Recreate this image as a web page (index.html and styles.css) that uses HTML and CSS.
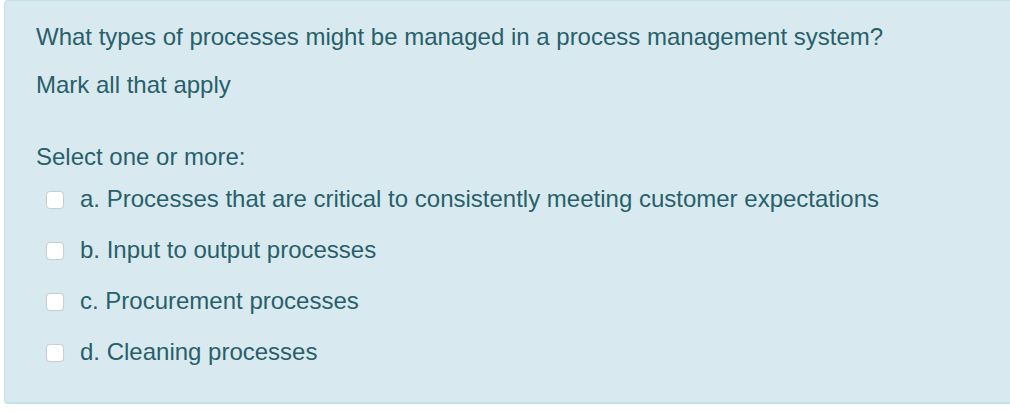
FILE: index.html
```html
<!DOCTYPE html>
<html>
<head>
<meta charset="utf-8">
<link rel="stylesheet" href="styles.css">
</head>
<body>
<div class="formulation">
  <p class="qtext">What types of processes might be managed in a process management system?</p>
  <p class="qtext">Mark all that apply</p>
  <div class="ablock">
    <div class="prompt">Select one or more:</div>
    <div class="answer">
      <label class="opt"><span class="box"></span><span>a. Processes that are critical to consistently meeting customer expectations</span></label>
      <label class="opt"><span class="box"></span><span>b. Input to output processes</span></label>
      <label class="opt"><span class="box"></span><span>c. Procurement processes</span></label>
      <label class="opt"><span class="box"></span><span>d. Cleaning processes</span></label>
    </div>
  </div>
</div>
</body>
</html>
```

FILE: styles.css
```css
html, body {
  margin: 0;
  padding: 0;
  background: #ffffff;
}
body {
  font-family: "Liberation Sans", Arial, Helvetica, sans-serif;
  font-size: 24px;
  color: #295f6b;
}
.formulation {
  margin-left: 4px;
  width: 1020px;
  height: 404px;
  box-sizing: border-box;
  background: #d8eaef;
  border: 1px solid #c3e2e8;
  border-bottom-width: 2px;
  border-radius: 4px;
  padding: 22px 0 0 31px;
}
.qtext {
  margin: 0 0 21px 0;
  line-height: 27px;
}
.ablock {
  margin-top: 45px;
}
.prompt {
  line-height: 27px;
  margin-bottom: 15px;
}
.answer {
  display: flex;
  flex-direction: column;
  gap: 24px;
}
.opt {
  display: flex;
  align-items: center;
  gap: 16px;
  padding-left: 10px;
  line-height: 27px;
}
.box {
  width: 18px;
  height: 18px;
  box-sizing: border-box;
  background: #ffffff;
  border: 1px solid #c9cfd0;
  border-radius: 4px;
  margin-top: 2px;
  flex: none;
  box-shadow: 0 0 1px rgba(0, 0, 0, 0.08);
}
```
